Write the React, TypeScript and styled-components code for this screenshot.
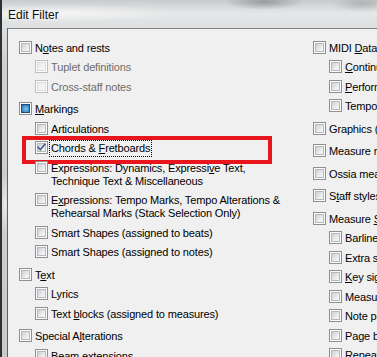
import React from "react";
import styled, { createGlobalStyle } from "styled-components";

const GlobalStyle = createGlobalStyle`
  html, body {
    margin: 0;
    padding: 0;
    background: #f0f0f0;
  }
  #root {
    width: 377px;
    height: 357px;
    overflow: hidden;
  }
`;

type CheckState = "off" | "on" | "mixed";

interface Item {
  label: React.ReactNode;
  state?: CheckState;
  disabled?: boolean;
  focused?: boolean;
  marked?: boolean;
}

interface Group {
  head: Item;
  items?: Item[];
}

const Window = styled.div`
  width: 377px;
  height: 357px;
  display: grid;
  grid-template-rows: 28px 1fr;
  overflow: hidden;
  box-sizing: border-box;
  border-left: 2px solid #2f3032;
  font-family: "Liberation Sans", Arial, sans-serif;
  background:
    radial-gradient(ellipse 6px 30px at 3px 205px, rgba(255, 255, 255, 0.55), transparent),
    radial-gradient(ellipse 40px 8px at 262px 2px, rgba(90, 90, 90, 0.45), transparent),
    radial-gradient(ellipse 30px 8px at 360px 4px, rgba(120, 120, 120, 0.35), transparent),
    radial-gradient(ellipse 120px 9px at 60px 13px, rgba(255, 255, 255, 0.6), transparent),
    linear-gradient(to bottom, #c8cacc 0px, #d6d8d9 6px, #e6e7e8 14px, #dedfe0 26px, #cfd0d1 60px, #c9cacb 100%);
`;

const TitleBar = styled.div`
  display: flex;
  align-items: center;
  padding: 1px 0 0 6px;
  font-size: 12px;
  color: #111;
  text-shadow: 0 0 6px rgba(255, 255, 255, 0.9);
`;

const Client = styled.div`
  margin-left: 5px;
  border-top: 1px solid #7f8183;
  border-left: 1px solid #5f6163;
  background: #f0f0f0;
  display: flex;
  align-items: flex-start;
  padding: 9.5px 0 0 11px;
  white-space: nowrap;
  min-width: 0;
`;

const Col = styled.div<{ $width?: number }>`
  display: flex;
  flex-direction: column;
  gap: 3px;
  flex: none;
  ${({ $width }) => $width && `width: ${$width}px;`}
`;

const Row = styled.div<{ $indent?: boolean }>`
  position: relative;
  display: flex;
  align-items: flex-start;
  padding: 3.25px 0 3.25px ${({ $indent }) => ($indent ? 16 : 0)}px;
`;

const Box = styled.span<{ $state: CheckState; $disabled?: boolean }>`
  position: relative;
  flex: none;
  width: 13px;
  height: 13px;
  box-sizing: border-box;
  margin-top: -1px;
  border: 1px solid ${({ $disabled }) => ($disabled ? "#bdbebf" : "#8e8f8f")};
  background: #fcfcfc;

  &::before {
    content: "";
    position: absolute;
    left: 1px;
    top: 1px;
    width: 9px;
    height: 9px;
    box-sizing: border-box;
    border: 1px solid ${({ $disabled }) => ($disabled ? "#dcdddf" : "#b5b9be")};
    background: ${({ $disabled }) =>
      $disabled
        ? "linear-gradient(135deg, #e9eaeb, #f8f8f8)"
        : "linear-gradient(135deg, #cdd1d6, #eef0f1 70%, #f7f7f7)"};
  }

  ${({ $state }) =>
    $state === "mixed" &&
    `
    &::after {
      content: "";
      position: absolute;
      left: 1px;
      top: 1px;
      width: 9px;
      height: 9px;
      box-sizing: border-box;
      border: 1px solid #1f4c78;
      background: radial-gradient(circle at 55% 55%, #7fc6f0 0%, #4b97d0 55%, #2b679f 100%);
    }
  `}
`;

const CheckMark = styled.svg`
  position: absolute;
  left: 0;
  top: 0;
  width: 11px;
  height: 11px;
  z-index: 1;
  fill: none;
  stroke: #4b5f8f;
  stroke-width: 1.7;
  stroke-linecap: square;
`;

const Label = styled.span<{ $disabled?: boolean; $focused?: boolean }>`
  margin-left: 3px;
  font-size: 11px;
  line-height: 13px;
  letter-spacing: -0.15px;
  color: ${({ $disabled }) => ($disabled ? "#6d6d6d" : "#000")};
  ${({ $focused }) =>
    $focused &&
    `
    outline: 1px dotted #000;
    outline-offset: 0;
    padding: 1px 1px;
    margin: -1px 0 -1px 2px;
  `}
`;

const Key = styled.span`
  text-decoration: underline;
  text-underline-offset: 1px;
`;

const Highlight = styled.div`
  position: absolute;
  left: 3px;
  top: -3.5px;
  width: 250px;
  height: 28px;
  box-sizing: border-box;
  border: 4px solid #e8151d;
  pointer-events: none;
`;

const u = (s: string) => <Key>{s}</Key>;

const leftGroups = (): Group[] => [
  {
    head: { label: <>N{u("o")}tes and rests</> },
    items: [
      { label: "Tuplet definitions", disabled: true },
      { label: "Cross-staff notes", disabled: true },
    ],
  },
  {
    head: { label: <>{u("M")}arkings</>, state: "mixed" },
    items: [
      { label: "Articulations" },
      { label: <>Chords &amp; {u("F")}retboards</>, state: "on", focused: true, marked: true },
      {
        label: (
          <>
            Expressions: Dynamics, Expressi{u("v")}e Text,
            <br />
            Technique Text &amp; Miscellaneous
          </>
        ),
      },
      {
        label: (
          <>
            E{u("x")}pressions: Tempo Marks, Tempo Alterations &amp;
            <br />
            Rehearsal Marks (Stack Selection Only)
          </>
        ),
      },
      { label: "Smart Shapes (assigned to beats)" },
      { label: <>Smart Shapes (assi{u("g")}ned to notes)</> },
    ],
  },
  {
    head: { label: <>T{u("e")}xt</> },
    items: [
      { label: "Lyrics" },
      { label: <>Text {u("b")}locks (assigned to measures)</> },
    ],
  },
  {
    head: { label: <>Special A{u("l")}terations</> },
    items: [{ label: "Beam extensions" }],
  },
];

const rightGroups = (): Group[] => [
  {
    head: { label: <>MIDI {u("D")}ata</> },
    items: [
      { label: <>{u("C")}ontinuous Data</> },
      { label: <>{u("P")}erformance Data</> },
      { label: "Tempo Changes" },
    ],
  },
  { head: { label: "Graphics (assigned to measures)" } },
  { head: { label: "Measure numbers" } },
  { head: { label: "Ossia measures" } },
  { head: { label: <>S{u("t")}aff styles</> } },
  {
    head: { label: <>Measure {u("S")}ettings</> },
    items: [
      { label: "Barlines" },
      { label: "Extra space" },
      { label: <>{u("K")}ey signatures</> },
      { label: "Measure width" },
      { label: "Note positioning" },
      { label: "Page breaks" },
      { label: "Repeats" },
    ],
  },
];

const CheckRow = ({ item, indent }: { item: Item; indent?: boolean }) => (
  <Row $indent={indent}>
    <Box $state={item.state || "off"} $disabled={item.disabled}>
      {item.state === "on" && (
        <CheckMark viewBox="0 0 11 11">
          <path d="M2.2 5.4 L4.3 7.8 L8.8 2.4" />
        </CheckMark>
      )}
    </Box>
    <Label $disabled={item.disabled} $focused={item.focused}>
      {item.label}
    </Label>
    {item.marked && <Highlight />}
  </Row>
);

const Column = ({ groups, width }: { groups: Group[]; width?: number }) => (
  <Col $width={width}>
    {groups.map((g, i) => (
      <div key={i}>
        <CheckRow item={g.head} />
        {g.items?.map((it, j) => (
          <CheckRow key={j} item={it} indent />
        ))}
      </div>
    ))}
  </Col>
);

export default function App() {
  return (
    <>
      <GlobalStyle />
      <Window>
        <TitleBar>Edit Filter</TitleBar>
        <Client>
          <Column groups={leftGroups()} width={294} />
          <Column groups={rightGroups()} />
        </Client>
      </Window>
    </>
  );
}
